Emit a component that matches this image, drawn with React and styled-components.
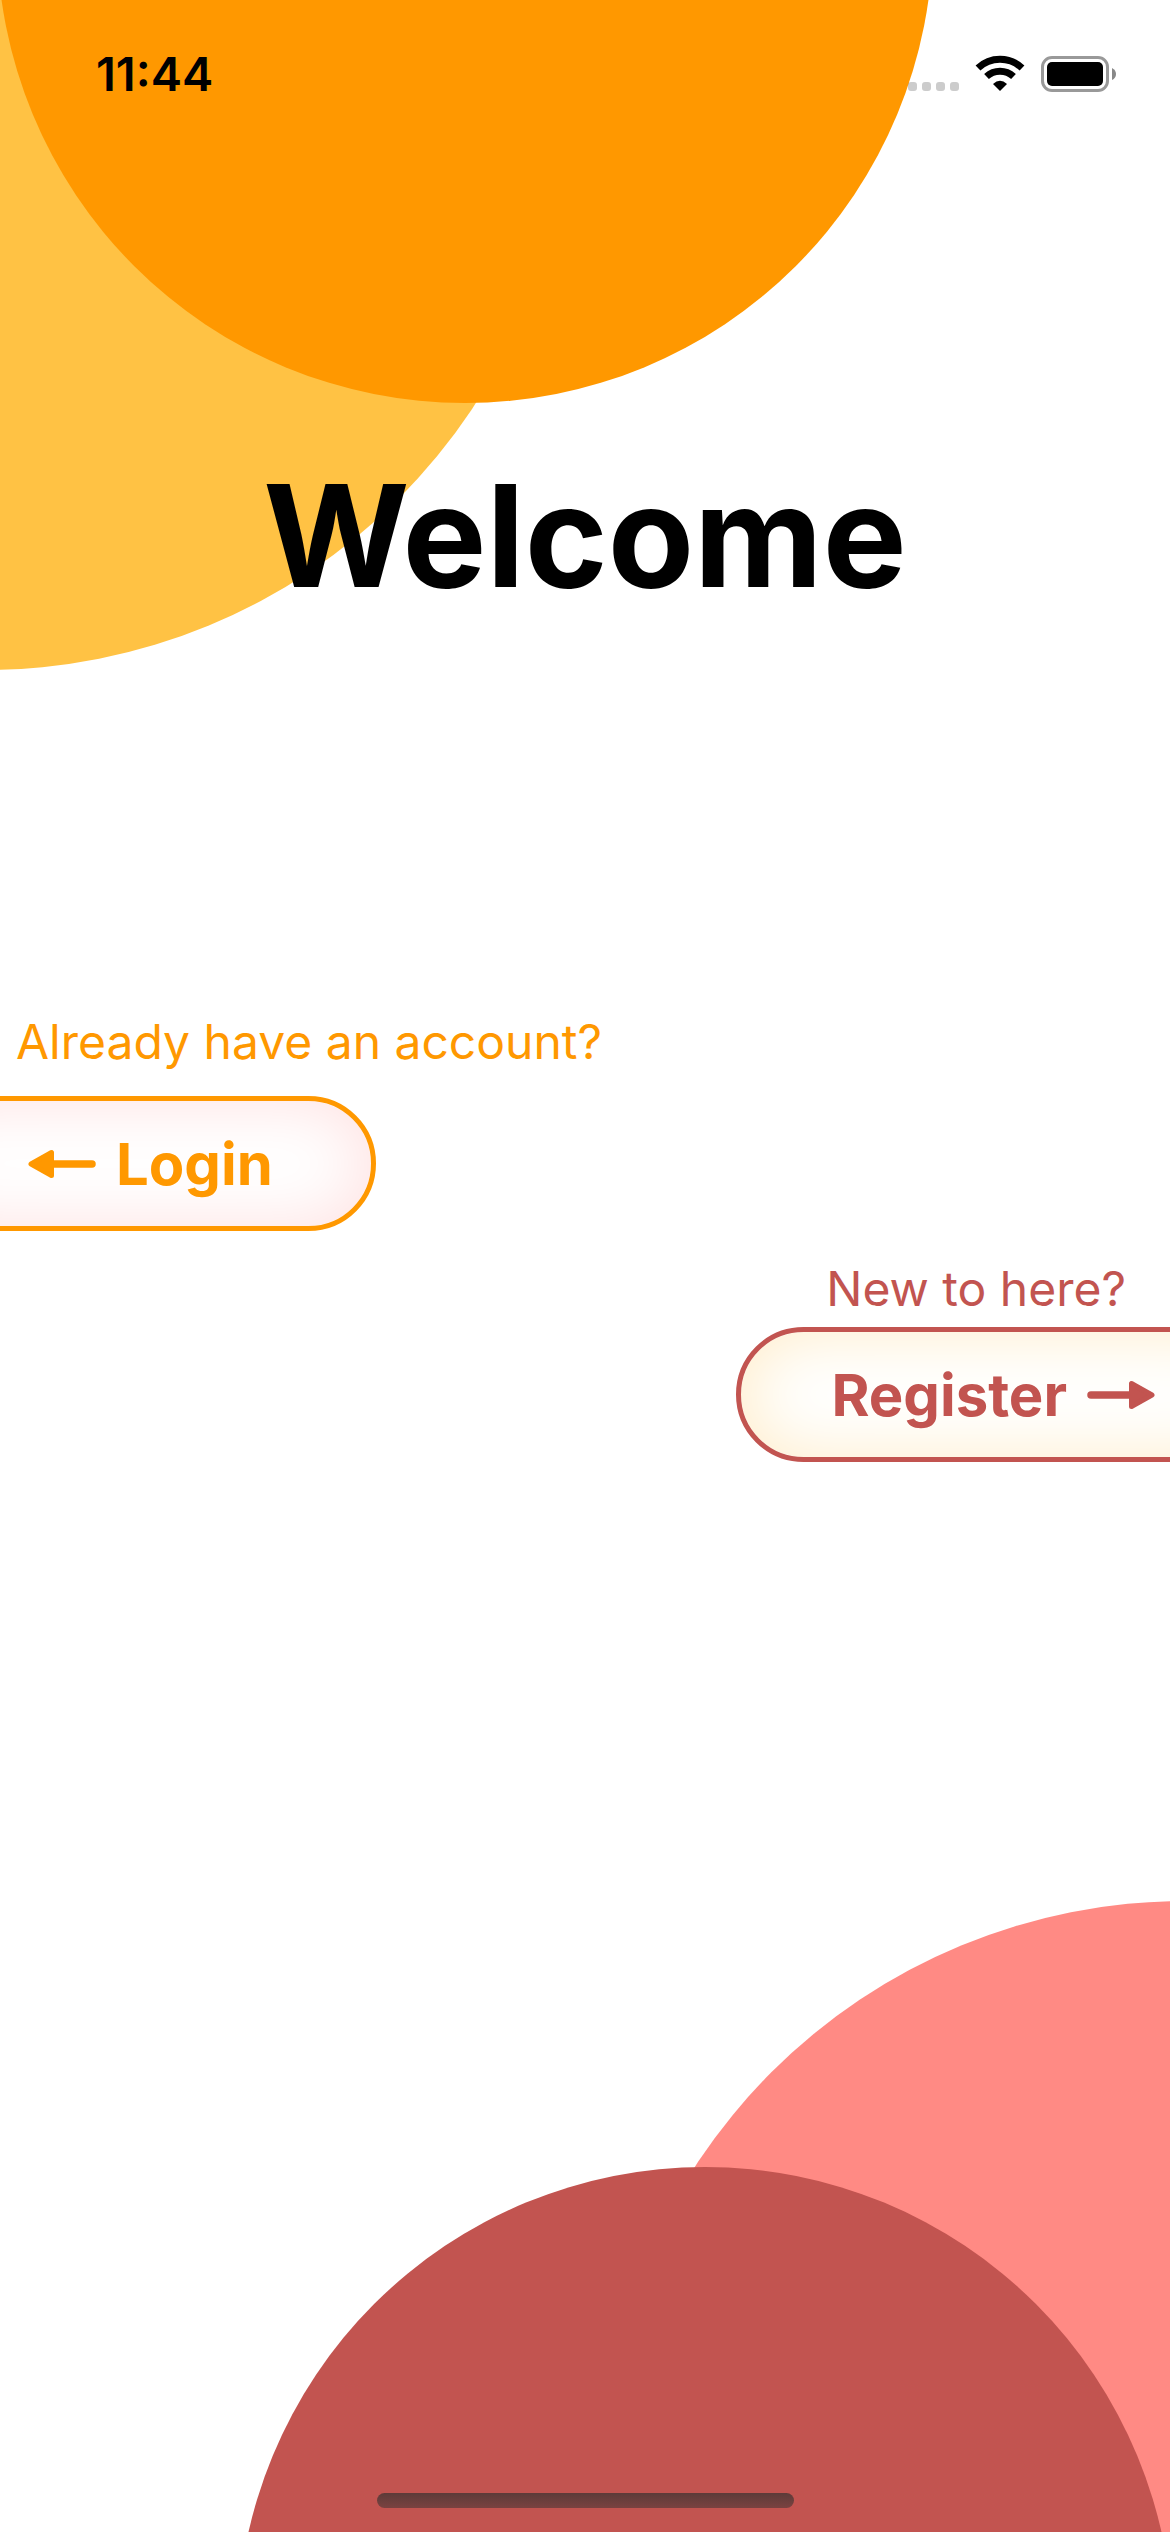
import React from "react";
import styled, { createGlobalStyle } from "styled-components";

const ORANGE = "#ff9800";
const RED = "#c25450";

const GlobalStyle = createGlobalStyle`
  *, *::before, *::after { box-sizing: border-box; }
  body {
    margin: 0;
    background: #fff;
    font-family: Inter, "Liberation Sans", sans-serif;
  }
`;

const Screen = styled.div`
  position: relative;
  display: flex;
  flex-direction: column;
  min-height: 100vh;
  overflow: hidden;
  isolation: isolate;
`;

const Circle = styled.div`
  position: absolute;
  z-index: -1;
  width: ${(p) => p.$size};
  aspect-ratio: 1;
  border-radius: 50%;
  background: ${(p) => p.$color};
`;

const LightSun = styled(Circle)`
  top: -500px;
  left: -600px;
`;

const Sun = styled(Circle)`
  top: -533px;
  left: -3px;
`;

const LightCoral = styled(Circle)`
  bottom: -539px;
  right: -600px;
`;

const Coral = styled(Circle)`
  bottom: -571px;
  right: -3px;
`;

const StatusBar = styled.header`
  display: flex;
  align-items: center;
  justify-content: space-between;
  height: 148px;
  padding: 0 54px 0 96px;
`;

const Time = styled.time`
  font-size: 47px;
  line-height: 56px;
  font-weight: 600;
`;

const Main = styled.main`
  flex: 1;
  display: flex;
  flex-direction: column;
  gap: 28px;
`;

const Title = styled.h1`
  margin: 298px 0 358px;
  font-size: 141px;
  line-height: 180px;
  font-weight: 700;
  text-align: center;
`;

const Option = styled.section`
  display: flex;
  flex-direction: column;
  align-items: ${(p) => p.$side};
  color: ${(p) => p.$color};
`;

const Prompt = styled.p`
  margin: 0;
  padding: 0 44px 0 16px;
  font-size: 48px;
  line-height: 60px;
`;

const PillButton = styled.button`
  display: flex;
  align-items: center;
  gap: 20px;
  height: 135px;
  border: 5px solid currentColor;
  border-radius: 68px;
  background: #fff;
  box-shadow: inset 0 0 70px ${(p) => p.$glow};
  color: inherit;
  font-family: inherit;
  font-size: 58px;
  line-height: 72px;
  font-weight: 700;
  cursor: pointer;
`;

const LoginButton = styled(PillButton)`
  margin: 24px 0 0 -100px;
  padding: 0 98px 0 123px;
`;

const RegisterButton = styled(PillButton)`
  margin: 8px -100px 0 0;
  padding: 0 110px 0 90px;
`;

const Footer = styled.footer`
  display: flex;
  justify-content: center;
  padding-bottom: 24px;
`;

const HomeIndicator = styled.div`
  width: 417px;
  height: 15px;
  border-radius: 8px;
  background: linear-gradient(#5d3b39, #7a4240);
`;

function StatusGlyphs() {
  return (
    <svg width="208" height="38" viewBox="0 0 208 38" aria-hidden="true">
      <g fill="#000" fillOpacity="0.2">
        <rect x="0" y="27" width="9" height="9" rx="3" />
        <rect x="14" y="27" width="9" height="9" rx="3" />
        <rect x="28" y="27" width="9" height="9" rx="3" />
        <rect x="42" y="27" width="9" height="9" rx="3" />
      </g>
      <g fill="none" stroke="#000" strokeWidth="7">
        <path d="M70 13A32 32 0 0 1 114 13" />
        <path d="M78.500 21.500A20 20 0 0 1 105.500 21.500" />
      </g>
      <path d="M92 36L85 29Q92 22.500 99 29Z" />
      <rect x="134.500" y="2.500" width="65" height="33" rx="9.500" fill="none" stroke="#999" strokeWidth="3" />
      <rect x="139" y="7" width="56" height="24" rx="5" />
      <path d="M204 13Q208 15 208 19T204 25Z" fill="#888" />
    </svg>
  );
}

const Arrow = styled.svg`
  flex: none;
  width: 68px;
  height: 30px;
  transform: ${(p) => (p.$flip ? "scaleX(-1)" : "none")};
`;

function ArrowIcon({ right }) {
  return (
    <Arrow viewBox="0 0 68 30" $flip={right} aria-hidden="true">
      <path d="M24 15H64" stroke="currentColor" strokeWidth="7.500" strokeLinecap="round" />
      <path
        d="M3 15L23.500 3.500V26.500Z"
        fill="currentColor"
        stroke="currentColor"
        strokeWidth="5"
        strokeLinejoin="round"
      />
    </Arrow>
  );
}

export default function App() {
  return (
    <Screen>
      <GlobalStyle />
      <LightSun $size="100%" $color="#ffc244" />
      <Sun $size="80%" $color={ORANGE} />
      <LightCoral $size="100%" $color="#ff8a84" />
      <Coral $size="80%" $color={RED} />

      <StatusBar>
        <Time>11:44</Time>
        <StatusGlyphs />
      </StatusBar>

      <Main>
        <Title>Welcome</Title>
        <Option $side="flex-start" $color={ORANGE}>
          <Prompt>Already have an account?</Prompt>
          <LoginButton type="button" $glow="#ffe0e0">
            <ArrowIcon />
            Login
          </LoginButton>
        </Option>
        <Option $side="flex-end" $color={RED}>
          <Prompt>New to here?</Prompt>
          <RegisterButton type="button" $glow="#ffecc8">
            Register
            <ArrowIcon right />
          </RegisterButton>
        </Option>
      </Main>

      <Footer>
        <HomeIndicator />
      </Footer>
    </Screen>
  );
}
